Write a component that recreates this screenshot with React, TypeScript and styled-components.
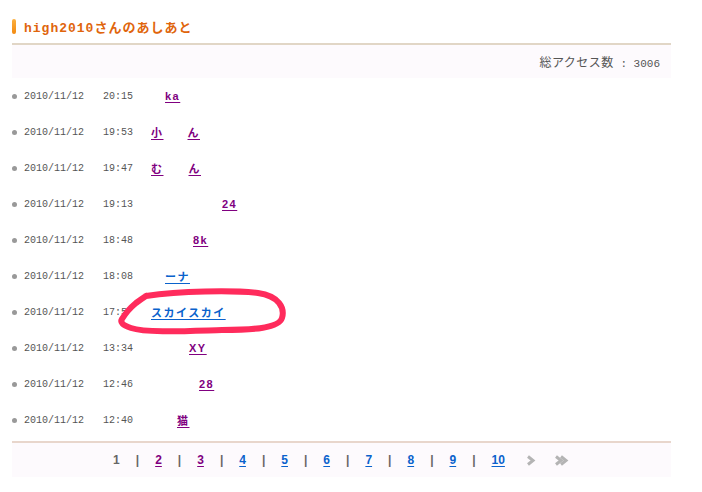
import React from "react";
import styled, { createGlobalStyle } from "styled-components";

const GlobalStyle = createGlobalStyle`
  html, body {
    margin: 0;
    padding: 0;
    background: #fff;
  }
`;

type Part = { text: string; gap: number };
type Visit = { date: string; time: string; parts: Part[]; visited: boolean };

const visits: Visit[] = [
  { date: "2010/11/12", time: "20:15", parts: [{ text: "ka", gap: 14 }], visited: true },
  { date: "2010/11/12", time: "19:53", parts: [{ text: "小", gap: 0 }, { text: "ん", gap: 24 }], visited: true },
  { date: "2010/11/12", time: "19:47", parts: [{ text: "む", gap: 0 }, { text: "ん", gap: 25 }], visited: true },
  { date: "2010/11/12", time: "19:13", parts: [{ text: "24", gap: 71 }], visited: true },
  { date: "2010/11/12", time: "18:48", parts: [{ text: "8k", gap: 42 }], visited: true },
  { date: "2010/11/12", time: "18:08", parts: [{ text: "ーナ", gap: 14 }], visited: false },
  { date: "2010/11/12", time: "17:5", parts: [{ text: "スカイスカイ", gap: 0 }], visited: false },
  { date: "2010/11/12", time: "13:34", parts: [{ text: "XY", gap: 38 }], visited: true },
  { date: "2010/11/12", time: "12:46", parts: [{ text: "28", gap: 48 }], visited: true },
  { date: "2010/11/12", time: "12:40", parts: [{ text: "猫", gap: 26 }], visited: true },
];

const pages = [1, 2, 3, 4, 5, 6, 7, 8, 9, 10];

export default function App() {
  return (
    <Page>
      <GlobalStyle />
      <Box>
        <Header>
          <Marker />
          <Title>high2010さんのあしあと</Title>
        </Header>

        <TotalBar>
          総アクセス数<Count> : 3006</Count>
        </TotalBar>

        <List>
          {visits.map((v, i) => (
            <Row key={i}>
              <Dot />
              <DateCell>{v.date}</DateCell>
              <TimeCell>{v.time}</TimeCell>
              <NameCell>
                {v.parts.map((p, j) => (
                  <NameLink key={j} href="#" $gap={p.gap} $visited={v.visited}>
                    {p.text}
                  </NameLink>
                ))}
              </NameCell>
            </Row>
          ))}
        </List>

        <Pager>
          {pages.map((n, i) => (
            <React.Fragment key={n}>
              {n === 1 ? (
                <Current>1</Current>
              ) : (
                <PageLink href="#" $visited={n <= 3}>
                  {n}
                </PageLink>
              )}
              {i < pages.length - 1 && <Sep>|</Sep>}
            </React.Fragment>
          ))}
          <Arrow $first>
            <Chevrons count={1} />
          </Arrow>
          <Arrow>
            <Chevrons count={2} />
          </Arrow>
        </Pager>
      </Box>

      {/* 手書きの丸 */}
      <Scribble viewBox="0 0 702 492" width="702" height="492">
        <path
          d="M146 296 C180 291 232 290 258 293 C279 296 285 308 282 318 C279 328 254 330 222 330 C186 331 146 333 131 328 C122 325 120 322 122 319 C125 314 130 308 136 303 C140 300 143 298 146 296"
          fill="none"
          stroke="#ff2b5c"
          strokeWidth="6"
          strokeLinecap="round"
          strokeLinejoin="round"
        />
      </Scribble>
    </Page>
  );
}

function Chevrons({ count }: { count: number }) {
  const w = count === 1 ? 10 : 15;
  return (
    <svg width={w} height="11" viewBox={`0 0 ${w} 11`}>
      {Array.from({ length: count }).map((_, i) => (
        <path
          key={i}
          d={`M${1 + i * 5} 1.5 L${6 + i * 5} 5.5 L${1 + i * 5} 9.5`}
          fill="none"
          stroke="#b4b4b4"
          strokeWidth="3"
        />
      ))}
    </svg>
  );
}

/* ================== styled-components ================== */

const Page = styled.div`
  position: relative;
  width: 702px;
  height: 492px;
  padding: 16px 0 0 12px;
  box-sizing: border-box;
`;

const Box = styled.div`
  width: 659px;
`;

const Header = styled.div`
  display: flex;
  align-items: center;
  gap: 8px;
  height: 20px;
  padding-bottom: 7px;
  border-bottom: 2px solid #e1d6c6;
`;

const Marker = styled.span`
  width: 4px;
  height: 15px;
  border-radius: 2px;
  background: linear-gradient(#fbb040, #f38a10);
`;

const Title = styled.h1`
  margin: 0;
  font-family: "Liberation Mono", "Noto Sans CJK JP", monospace;
  font-size: 13px;
  font-weight: 700;
  letter-spacing: 1px;
  color: #e0650c;
`;

const TotalBar = styled.div`
  height: 33px;
  line-height: 33px;
  padding-right: 11px;
  text-align: right;
  background: #fdfafd;
  font-family: "Noto Sans CJK JP", sans-serif;
  font-size: 12px;
  letter-spacing: 0.5px;
  color: #555;
`;

const Count = styled.span`
  font-family: "Liberation Mono", monospace;
  font-size: 11px;
  letter-spacing: 0;
`;

const List = styled.ul`
  margin: 0;
  padding: 0;
  list-style: none;
`;

const Row = styled.li`
  display: flex;
  align-items: center;
  height: 36px;
`;

const Dot = styled.span`
  width: 5px;
  height: 5px;
  margin: 0 7px 0 0;
  border-radius: 50%;
  background: #999;
`;

const DateCell = styled.span`
  width: 79px;
  font-family: "Liberation Mono", monospace;
  font-size: 10px;
  color: #555;
`;

const TimeCell = styled.span`
  width: 48px;
  font-family: "Liberation Mono", monospace;
  font-size: 10px;
  color: #555;
`;

const NameCell = styled.span`
  display: flex;
  align-items: center;
`;

const NameLink = styled.a<{ $gap: number; $visited: boolean }>`
  margin-left: ${({ $gap }) => $gap}px;
  font-family: "Liberation Sans", "Noto Sans CJK JP", sans-serif;
  font-size: 11px;
  font-weight: 700;
  letter-spacing: 1.5px;
  color: ${({ $visited }) => ($visited ? "#800080" : "#0a62cc")};
  text-decoration: underline;
  text-underline-offset: 2px;
`;

const Pager = styled.div`
  display: flex;
  align-items: center;
  justify-content: center;
  gap: 16px;
  height: 34px;
  margin-top: 3px;
  border-top: 2px solid #e8d6cc;
  background: #fdfafd;
  font-family: "Liberation Sans", sans-serif;
  font-size: 12px;
  font-weight: 700;
`;

const Current = styled.span`
  color: #666;
`;

const PageLink = styled.a<{ $visited: boolean }>`
  color: ${({ $visited }) => ($visited ? "#800080" : "#0a62cc")};
  text-decoration: underline;
  text-underline-offset: 2px;
`;

const Sep = styled.span`
  color: #666;
  font-weight: 700;
`;

const Arrow = styled.span<{ $first?: boolean }>`
  display: flex;
  margin-left: ${({ $first }) => ($first ? 6 : 2)}px;
`;

const Scribble = styled.svg`
  position: absolute;
  top: 0;
  left: 0;
  pointer-events: none;
`;
